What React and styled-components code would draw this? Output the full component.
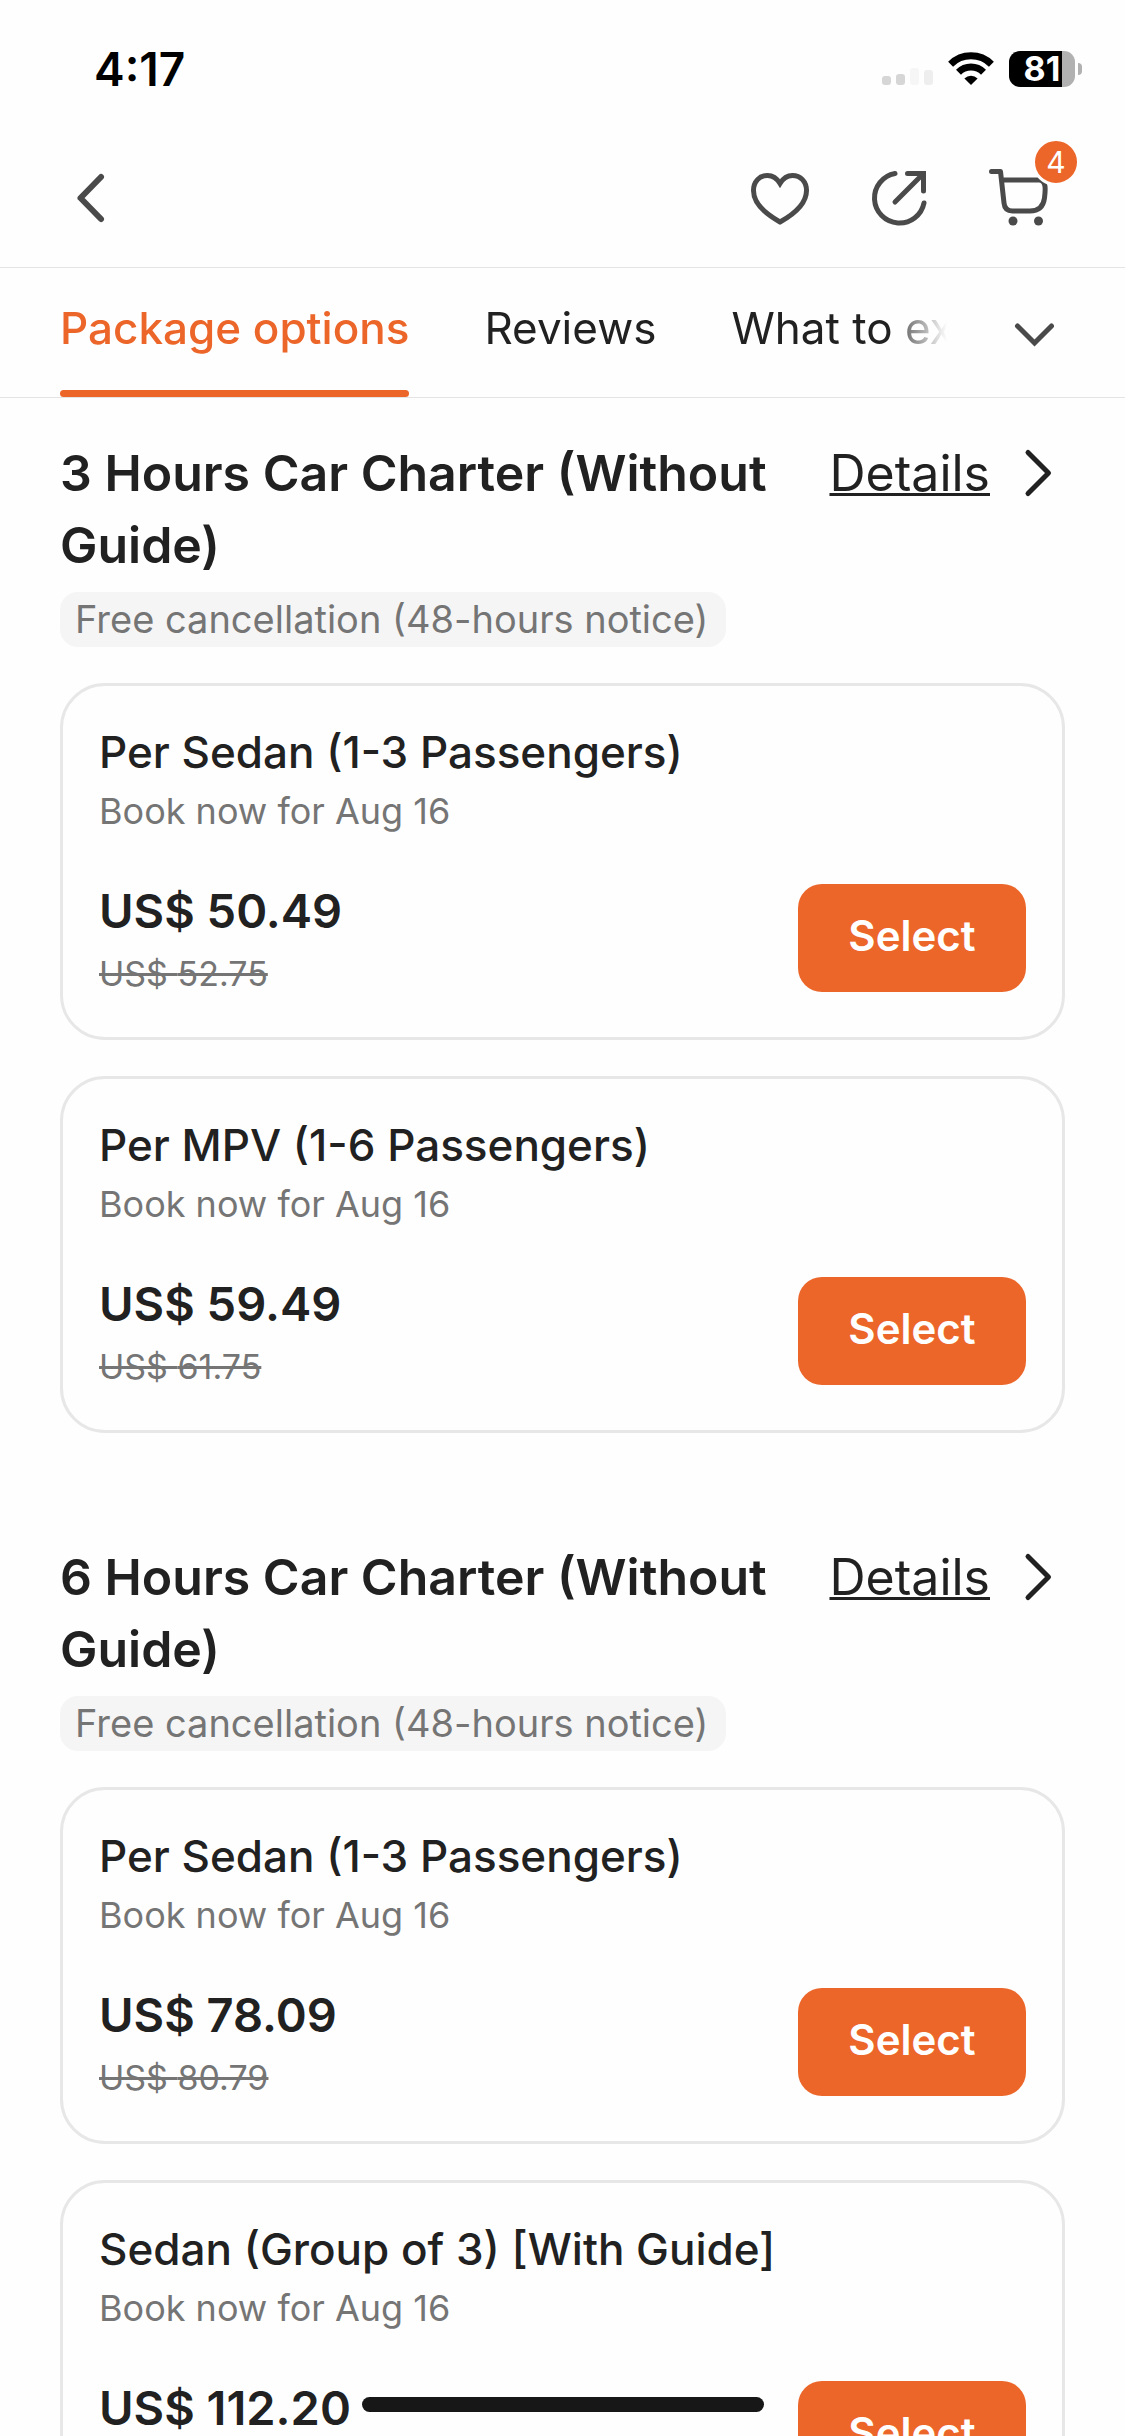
import React, { useState } from "react";
import styled, { createGlobalStyle } from "styled-components";

const GlobalStyle = createGlobalStyle`
  * {
    box-sizing: border-box;
  }

  body {
    margin: 0;
    background: #fefefe;
    color: #212121;
    font-family: Inter, "Liberation Sans", sans-serif;
  }

  button {
    border: 0;
    padding: 0;
    background: none;
    color: inherit;
    font-family: inherit;
    cursor: pointer;
  }

  svg {
    display: block;
  }
`;

const Screen = styled.div`
  display: flex;
  flex-direction: column;
  height: 100vh;
  overflow: hidden;
`;

const StatusBar = styled.div`
  display: flex;
  flex-shrink: 0;
  align-items: center;
  justify-content: space-between;
  height: 138px;
  padding: 0 43px 0 94px;
  color: #000;
`;

const Clock = styled.time`
  font-size: 46px;
  font-weight: 600;
  line-height: 54px;
`;

const StatusIcons = styled.div`
  display: flex;
  align-items: center;
  gap: 15px;
`;

const Battery = styled.div`
  display: flex;
  align-items: center;
  gap: 3px;
`;

const BatteryBody = styled.div`
  display: flex;
  align-items: center;
  justify-content: center;
  width: 66px;
  height: 36px;
  border-radius: 11px;
  background: linear-gradient(to right, #000 80%, #b1b1b1 80%);
  color: #fff;
  font-size: 34px;
  font-weight: 700;
  line-height: 36px;
`;

const BatteryCap = styled.div`
  width: 4px;
  height: 12px;
  border-radius: 0 6px 6px 0;
  background: #b1b1b1;
`;

const Header = styled.header`
  display: flex;
  flex-shrink: 0;
  align-items: center;
  justify-content: space-between;
  padding: 24px 69px 33px 60px;
  border-bottom: 1px solid #e4e4e4;
  color: #4a4a4a;
`;

const Actions = styled.div`
  display: flex;
  gap: 48px;
`;

const IconButton = styled.button`
  position: relative;
  width: 72px;
  height: 72px;
`;

const CartCount = styled.span`
  position: absolute;
  top: -24px;
  right: -24px;
  width: 48px;
  height: 48px;
  border: 3px solid #fefefe;
  border-radius: 50%;
  background: #ec662a;
  color: #fff;
  font-size: 30px;
  line-height: 42px;
  text-align: center;
`;

const TabBar = styled.nav`
  display: flex;
  flex-shrink: 0;
  align-items: center;
  justify-content: space-between;
  padding: 0 54px 0 60px;
  border-bottom: 1px solid #e4e4e4;
`;

const TabList = styled.div`
  display: flex;
  flex: 1;
  gap: 75px;
  min-width: 0;
  overflow: hidden;
  mask-image: linear-gradient(
    to left,
    transparent 4px,
    rgba(0, 0, 0, 0.7) 50px,
    #000 56px
  );
`;

const Tab = styled.button`
  position: relative;
  flex-shrink: 0;
  padding: 29px 0 37px;
  font-size: 44px;
  line-height: 63px;
  white-space: nowrap;

  &[aria-selected="true"] {
    color: #ec662a;
    font-weight: 500;
  }

  &[aria-selected="true"]::after {
    content: "";
    position: absolute;
    right: 0;
    bottom: 0;
    left: 0;
    height: 7px;
    border-radius: 4px;
    background: #ec662a;
  }
`;

const TabToggle = styled.button`
  width: 72px;
  height: 72px;
  margin-left: 48px;
  color: #4a4a4a;
`;

const Packages = styled.main`
  display: flex;
  flex: 1;
  flex-direction: column;
  gap: 108px;
  min-height: 0;
  padding: 39px 60px 0;
  overflow: hidden;
`;

const Section = styled.section`
  display: flex;
  flex-shrink: 0;
  flex-direction: column;
  align-items: flex-start;
`;

const SectionHead = styled.div`
  display: flex;
  align-items: flex-start;
  gap: 30px;
  width: 100%;
`;

const SectionTitle = styled.h2`
  flex: 1;
  margin: 0;
  font-size: 50px;
  font-weight: 600;
  line-height: 72px;
`;

const DetailsLink = styled.a`
  display: flex;
  align-items: center;
  gap: 21px;
  color: inherit;
  font-size: 50px;
  line-height: 72px;
  text-decoration: none;

  span {
    text-decoration: underline;
    text-decoration-thickness: 3px;
    text-decoration-skip-ink: none;
    text-underline-offset: 2px;
  }
`;

const Policy = styled.p`
  margin: 11px 0 36px;
  padding: 0 18px 0 15px;
  border-radius: 18px;
  background: #f5f5f5;
  color: #757575;
  font-size: 38px;
  line-height: 55px;
`;

const OptionList = styled.div`
  display: flex;
  flex-direction: column;
  gap: 36px;
  width: 100%;
`;

const Option = styled.article`
  padding: 35px 36px 36px;
  border: 3px solid #e7e7e7;
  border-radius: 45px;
`;

const OptionTitle = styled.h3`
  margin: 0;
  font-size: 44px;
  font-weight: 500;
  line-height: 63px;
`;

const BookingNote = styled.p`
  margin: 0;
  color: #757575;
  font-size: 36px;
  line-height: 54px;
`;

const OptionFoot = styled.div`
  display: flex;
  align-items: center;
  justify-content: space-between;
  margin-top: 37px;
`;

const Prices = styled.div`
  min-height: 126px;
`;

const Price = styled.p`
  margin: 0;
  font-size: 47px;
  font-weight: 600;
  line-height: 72px;
`;

const OldPrice = styled.del`
  display: block;
  color: #757575;
  font-size: 34px;
  line-height: 54px;
`;

const SelectButton = styled.button`
  width: 228px;
  height: 108px;
  padding-bottom: 5px;
  border-radius: 24px;
  background: #ec662a;
  color: #fff;
  font-size: 42px;
  font-weight: 600;
  line-height: 63px;
`;

const HomeIndicator = styled.div`
  position: fixed;
  bottom: 24px;
  left: 50%;
  width: 402px;
  height: 15px;
  border-radius: 8px;
  background: #171717;
  transform: translateX(-50%);
`;

const Icon = ({ size = 72, width = 5, children }) => (
  <svg
    width={size}
    height={size}
    viewBox={`0 0 ${size} ${size}`}
    fill="none"
    stroke="currentColor"
    strokeWidth={width}
    strokeLinecap="round"
    strokeLinejoin="round"
    aria-hidden="true"
  >
    {children}
  </svg>
);

const Signal = () => (
  <svg width="51" height="36" viewBox="0 0 51 36" aria-hidden="true">
    <rect x="0" y="25" width="9" height="9" rx="3" fill="#d6d6d6" />
    <rect x="14" y="23" width="9" height="11" rx="3" fill="#d6d6d6" />
    <rect x="28" y="17" width="9" height="17" rx="3" fill="#f6f6f6" />
    <rect x="42" y="19" width="9" height="15" rx="3" fill="#eeeeee" />
  </svg>
);

const Wifi = () => (
  <svg width="46" height="36" viewBox="0 0 46 36" aria-hidden="true">
    <g fill="none" stroke="#000" strokeWidth="7">
      <path d="M2.6 13.2a29 29 0 0 1 40.8 0" />
      <path d="M10.5 21.2a17.7 17.7 0 0 1 25 0" />
    </g>
    <path d="M23 34l-6.6-6.6a9.4 9.4 0 0 1 13.2 0z" />
  </svg>
);

const tabs = ["Package options", "Reviews", "What to expect"];

const packages = [
  {
    title: "3 Hours Car Charter (Without Guide)",
    options: [
      { name: "Per Sedan (1-3 Passengers)", price: "50.49", old: "52.75" },
      { name: "Per MPV (1-6 Passengers)", price: "59.49", old: "61.75" },
    ],
  },
  {
    title: "6 Hours Car Charter (Without Guide)",
    options: [
      { name: "Per Sedan (1-3 Passengers)", price: "78.09", old: "80.79" },
      { name: "Sedan (Group of 3) [With Guide]", price: "112.20" },
    ],
  },
];

const OptionCard = ({ name, price, old }) => {
  return (
    <Option>
      <OptionTitle>{name}</OptionTitle>
      <BookingNote>Book now for Aug 16</BookingNote>
      <OptionFoot>
        <Prices>
          <Price>US$ {price}</Price>
          {old && <OldPrice>US$ {old}</OldPrice>}
        </Prices>
        <SelectButton type="button">Select</SelectButton>
      </OptionFoot>
    </Option>
  );
};

const App = () => {
  const [active, setActive] = useState(tabs[0]);

  return (
    <Screen>
      <GlobalStyle />

      <StatusBar>
        <Clock>4:17</Clock>
        <StatusIcons>
          <Signal />
          <Wifi />
          <Battery>
            <BatteryBody>81</BatteryBody>
            <BatteryCap />
          </Battery>
        </StatusIcons>
      </StatusBar>

      <Header>
        <IconButton type="button" aria-label="Back">
          <Icon width={6}>
            <path d="M41 15L20.500 36L41 57" />
          </Icon>
        </IconButton>
        <Actions>
          <IconButton type="button" aria-label="Save">
            <Icon>
              <path
                strokeLinejoin="miter"
                d="M36 21.500C33 16.500 29 13.500 23.500 13.500C15.500 13.500 9.500 19.500 9.500 28.500C9.500 42 22.500 52.500 36 60C49.500 52.500 62.500 42 62.500 28.500C62.500 19.500 56.500 13.500 48.500 13.500C43 13.500 39 16.500 36 21.500Z"
              />
            </Icon>
          </IconButton>
          <IconButton type="button" aria-label="Share">
            <Icon>
              <path d="M31 11.500A25 25 0 1 0 60 41" />
              <path d="M31 40L59 12" />
              <path strokeLinejoin="miter" d="M43.500 11.500H59.500V29" />
            </Icon>
          </IconButton>
          <IconButton type="button" aria-label="Cart">
            <Icon>
              <path d="M7.500 9.500H16.500L20 41C20.500 46.500 23.500 49 28.500 49H46C55 49 59.500 44 60.500 36C61.500 28 62.500 18 55 18H17.500" />
              <circle cx="29" cy="59" r="4.500" fill="currentColor" stroke="none" />
              <circle cx="54.500" cy="59" r="4.500" fill="currentColor" stroke="none" />
            </Icon>
            <CartCount>4</CartCount>
          </IconButton>
        </Actions>
      </Header>

      <TabBar>
        <TabList role="tablist">
          {tabs.map((tab) => (
            <Tab
              key={tab}
              type="button"
              role="tab"
              aria-selected={tab === active}
              onClick={() => setActive(tab)}
            >
              {tab}
            </Tab>
          ))}
        </TabList>
        <TabToggle type="button" aria-label="All sections">
          <Icon width={5}>
            <path strokeLinejoin="miter" d="M18.500 29L35.500 46L52.500 29" />
          </Icon>
        </TabToggle>
      </TabBar>

      <Packages>
        {packages.map(({ title, options }) => (
          <Section key={title}>
            <SectionHead>
              <SectionTitle>{title}</SectionTitle>
              <DetailsLink href="#details">
                <span>Details</span>
                <Icon size={54}>
                  <path d="M17 6.500L37.500 27L17 47.500" />
                </Icon>
              </DetailsLink>
            </SectionHead>
            <Policy>Free cancellation (48-hours notice)</Policy>
            <OptionList>
              {options.map((option) => (
                <OptionCard key={option.name} {...option} />
              ))}
            </OptionList>
          </Section>
        ))}
      </Packages>

      <HomeIndicator />
    </Screen>
  );
};

export default App;
